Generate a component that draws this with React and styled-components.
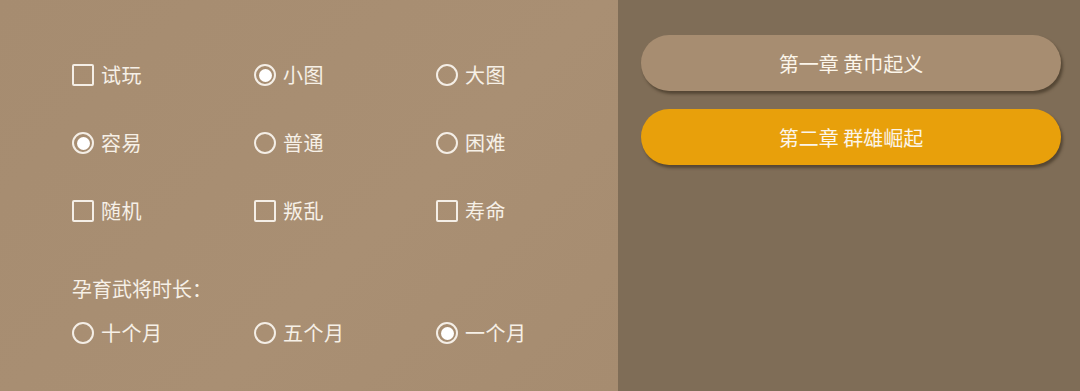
import React from 'react'
import styled, { createGlobalStyle } from 'styled-components';

const Global = createGlobalStyle`
  html, body { margin:0; padding:0; }
  body { font-family:"Noto Sans CJK SC", "Noto Sans", sans-serif; }
`;

const options = [
  [{ t: 'check', label: '试玩' }, { t: 'radio', label: '小图', on: true }, { t: 'radio', label: '大图' }],
  [{ t: 'radio', label: '容易', on: true }, { t: 'radio', label: '普通' }, { t: 'radio', label: '困难' }],
  [{ t: 'check', label: '随机' }, { t: 'check', label: '叛乱' }, { t: 'check', label: '寿命' }],
];

const months = [
  { label: '十个月' }, { label: '五个月' }, { label: '一个月', on: true },
];

const Option = ({ t, label, on }) => (
  <Item>
    {t === 'check' ? <Box /> : <Radio $on={on} />}
    <Label>{label}</Label>
  </Item>
);

const App = () => (
  <>
    <Global />
    <Screen>
      <Settings>
        <Grid>
          {options.flat().map((o, i) => <Option key={i} {...o} />)}
        </Grid>
        <Title>孕育武将时长：</Title>
        <Grid>
          {months.map((o, i) => <Option key={i} t="radio" {...o} />)}
        </Grid>
      </Settings>
      <Chapters>
        <Chapter>第一章 黄巾起义</Chapter>
        <Chapter $active>第二章 群雄崛起</Chapter>
      </Chapters>
    </Screen>
  </>
);

const Screen = styled.div`
  display:flex;
  width:1080px; height:391px;
  overflow:hidden;
`;

const Settings = styled.div`
  width:618px;
  box-sizing:border-box;
  padding:64px 0 0 72px;
  background:linear-gradient(135deg, #a68c70 0%, #a98f73 60%, #a68c70 100%);
  display:flex; flex-direction:column;
`;

const Grid = styled.div`
  display:grid;
  grid-template-columns:182px 182px 182px;
  row-gap:46px;
`;

const Item = styled.div`
  display:flex; align-items:center;
  height:22px;
  gap:7px;
`;

const Box = styled.span`
  width:18px; height:18px;
  border:2px solid #f4eee6;
  border-radius:2px;
  flex:none;
`;

const Radio = styled.span`
  width:18px; height:18px;
  border:2px solid #f4eee6;
  border-radius:50%;
  flex:none;
  display:flex; align-items:center; justify-content:center;
  &::after{
    content:'';
    width:13px; height:13px; border-radius:50%;
    background:#ffffff;
    display:${p => (p.$on ? 'block' : 'none')};
  }
`;

const Label = styled.span`
  font-size:20px;
  color:#f6f0e7;
  line-height:22px;
  letter-spacing:0.5px;
`;

const Title = styled.div`
  font-size:20px;
  color:#f6f0e7;
  line-height:22px;
  margin:56px 0 22px;
`;

const Chapters = styled.div`
  flex:1;
  background:#7f6d57;
  padding:35px 19px 0 23px;
  display:flex; flex-direction:column;
  gap:18px;
`;

const Chapter = styled.div`
  height:56px;
  border-radius:28px;
  background:${p => (p.$active ? '#e8a00b' : '#a78d71')};
  box-shadow:2px 3px 3px rgba(50,38,24,0.55);
  color:#fbf5ea;
  font-size:20px;
  display:flex; align-items:center; justify-content:center;
`;

export default App;
